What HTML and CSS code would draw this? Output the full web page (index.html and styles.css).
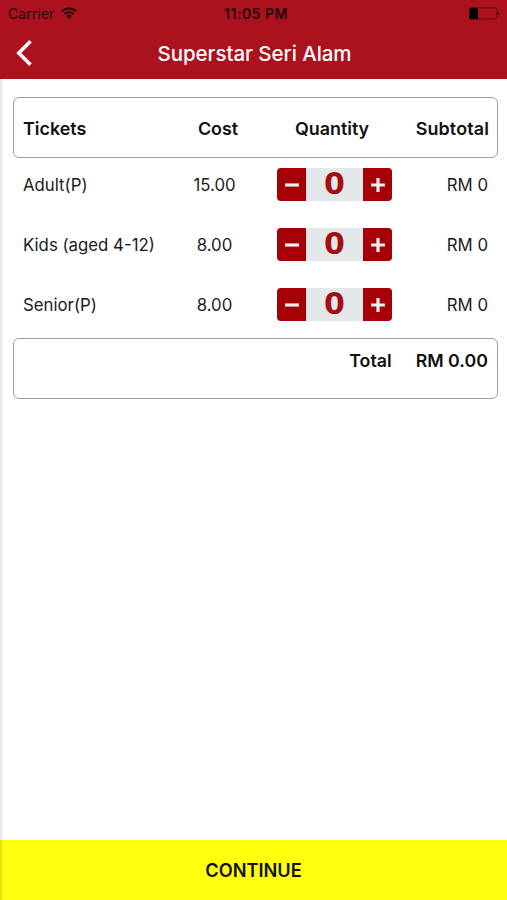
FILE: index.html
```html
<!DOCTYPE html>
<html lang="en">
<head>
<meta charset="utf-8">
<title>Superstar Seri Alam</title>
<link rel="stylesheet" href="styles.css">
</head>
<body>
<div class="screen">
  <header class="top">
    <div class="status">
      <div class="carrier"><span>Carrier</span>
        <svg class="wifi" width="16" height="12" viewBox="0 0 16 12" fill="none" stroke="#25040a" stroke-width="1.9"><path d="M1 4.4a10 10 0 0 1 14 0M3.5 7a6.4 6.4 0 0 1 9 0"/><path d="M8 11.5 5.3 8.9a3.9 3.9 0 0 1 5.4 0z" fill="#25040a" stroke="none"/></svg>
      </div>
      <span class="time">11:05 PM</span>
      <svg class="battery" width="31" height="13" viewBox="0 0 31 13"><rect x=".9" y=".9" width="27" height="11" rx="1.8" fill="none" stroke="#5d0b12" stroke-width=".9"/><path d="M2.3.7H9v11.6H2.3A1.8 1.8 0 0 1 .5 10.5v-8A1.8 1.8 0 0 1 2.3.7z" fill="#000"/><path d="M28.5 4.4q1.7.6 1.7 2.1t-1.7 2.1z" fill="#25040a"/></svg>
    </div>
    <div class="nav">
      <svg class="back" width="17" height="26" viewBox="0 0 17 26" fill="none" stroke="#fff" stroke-width="3.6"><path d="M15.5 1.3 3.8 13l11.7 11.7"/></svg>
      <h1>Superstar Seri Alam</h1>
    </div>
  </header>
  <main>
    <div class="box row head"><span>Tickets</span><span class="cost">Cost</span><span class="qty">Quantity</span><span class="sub">Subtotal</span></div>
    <div class="row"><span>Adult(P)</span><span class="cost">15.00</span><div class="stepper"><button><svg width="14" height="14"><path d="M0 7h14"/></svg></button><b>0</b><button><svg width="14" height="14"><path d="M0 7h14M7 0v14"/></svg></button></div><span class="sub">RM 0</span></div>
    <div class="row"><span>Kids (aged 4-12)</span><span class="cost">8.00</span><div class="stepper"><button><svg width="14" height="14"><path d="M0 7h14"/></svg></button><b>0</b><button><svg width="14" height="14"><path d="M0 7h14M7 0v14"/></svg></button></div><span class="sub">RM 0</span></div>
    <div class="row"><span>Senior(P)</span><span class="cost">8.00</span><div class="stepper"><button><svg width="14" height="14"><path d="M0 7h14"/></svg></button><b>0</b><button><svg width="14" height="14"><path d="M0 7h14M7 0v14"/></svg></button></div><span class="sub">RM 0</span></div>
    <div class="box total"><span>Total</span><span class="amount">RM 0.00</span></div>
  </main>
  <button class="continue">CONTINUE</button>
  <div class="edge"></div>
</div>
</body>
</html>
```
FILE: styles.css
```css
* { box-sizing: border-box; }
body { margin: 0; font-family: Inter, sans-serif; color: #1b1b1b; }
button { border: 0; padding: 0; font-family: inherit; }
svg { display: block; }
.screen { position: relative; height: 900px; display: flex; flex-direction: column; background: #fff; overflow: hidden; }
.top { height: 79px; background: #ac121e; }
.status { height: 27px; display: grid; grid-template-columns: 1fr auto 1fr; align-items: center; padding: 0 7px 0 8px; color: #25040a; font-size: 14px; }
.carrier { display: flex; align-items: center; gap: 6px; letter-spacing: .1px; }
.wifi { margin-bottom: 2px; }
.time { font-weight: 600; letter-spacing: .5px; margin-left: 4px; }
.battery { justify-self: end; }
.nav { height: 52px; display: grid; grid-template-columns: 40px 1fr 40px; align-items: center; }
.back { margin: 0 0 1px 15px; }
h1 { margin: 0 0 0 2px; text-align: center; color: #fff; font-size: 20.5px; font-weight: 500; letter-spacing: -.05px; }
main { flex: 1; padding: 18px 9px 0 13px; }
.row { display: grid; grid-template-columns: 148px 87px 147px 1fr; align-items: center; height: 60px; padding: 0 10px 7px; font-size: 16.8px; }
.box { border: 1px solid #a0a0a0; border-radius: 6px; height: 61px; }
.head { padding: 1px 8px 0 9px; color: #111; font-size: 17.9px; font-weight: 600; }
.head .cost { padding-left: 7px; }
.cost { text-align: center; }
.qty { text-align: center; padding-left: 1px; }
.sub { text-align: right; }
.head .sub { letter-spacing: .15px; }
.stepper { justify-self: center; margin-left: 6px; width: 115px; height: 33px; display: flex; border-radius: 4px; background: #e4e8eb; }
.stepper button { width: 29px; display: grid; place-items: center; background: #a40006; }
.stepper button:first-child { border-radius: 4px 0 0 4px; }
.stepper button:last-child { border-radius: 0 4px 4px 0; }
.stepper path { fill: none; stroke: #eee; stroke-width: 3.2; }
.stepper b { flex: 1; text-align: center; font: bold 30px/33px "DejaVu Sans", sans-serif; margin-top: -1px; color: #a50d13; }
.total { display: flex; justify-content: flex-end; gap: 24px; padding: 11px 9px 0; color: #111; font-size: 17.8px; font-weight: 600; line-height: 22px; }
.continue { height: 60px; background: #ffff0d; color: #111; font-size: 18.2px; font-weight: 600; }
.edge { position: absolute; left: 0; top: 79px; bottom: 0; width: 4px; background: linear-gradient(90deg, rgba(0,0,0,.12), transparent); }
```
